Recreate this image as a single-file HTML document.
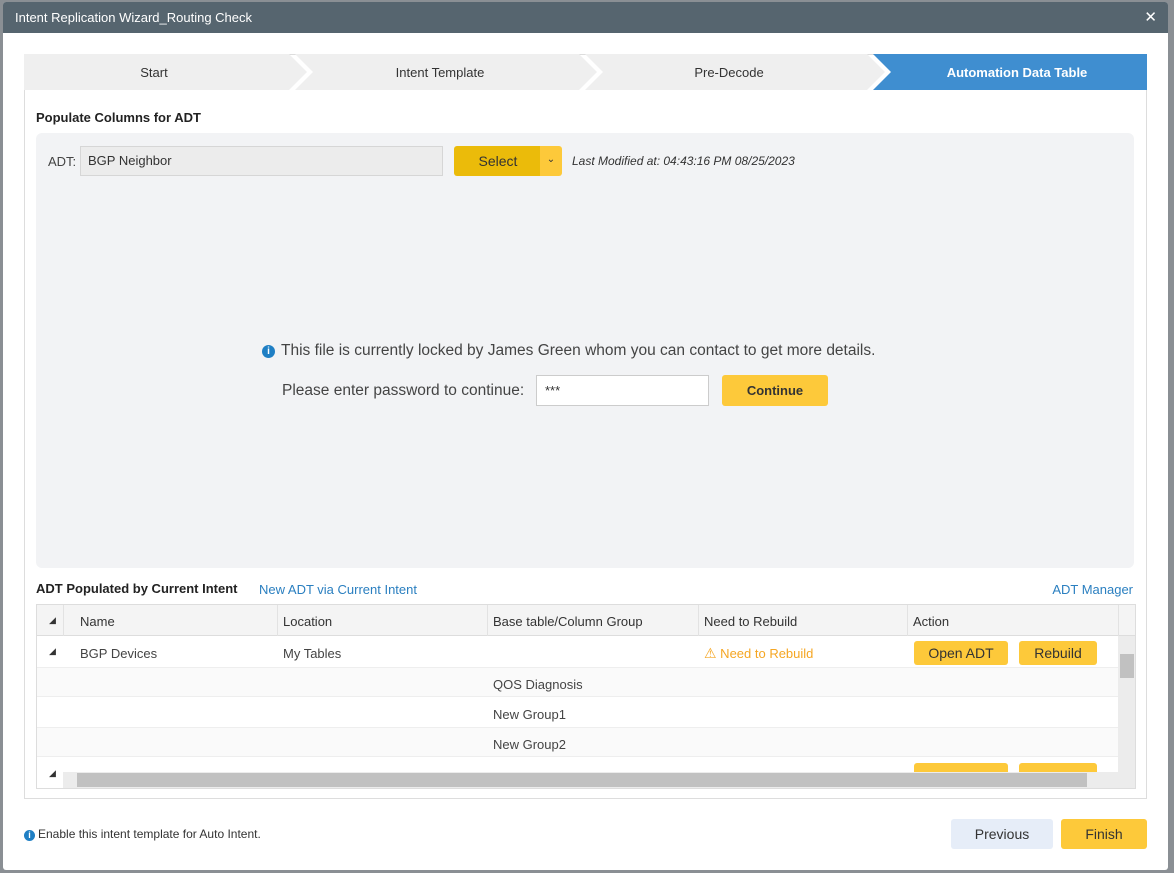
<!DOCTYPE html>
<html><head><style>
*{box-sizing:border-box;margin:0;padding:0}
body{width:1174px;height:873px;background:#8a8f94;font-family:"Liberation Sans",sans-serif;font-size:13px;color:#333;position:relative;overflow:hidden}
.dlg{position:absolute;left:3px;top:2px;width:1165px;height:868px;background:#fff;border-radius:3px;overflow:hidden}
.title{height:31px;background:#56656f;color:#fff;font-size:13px;line-height:31px;padding-left:12px;position:relative}
.x{position:absolute;right:11px;top:0;font-size:15px}
.abs{position:absolute}
.tbl div{position:absolute}
.btn{background:#fdc93a;border-radius:3px;text-align:center;color:#333}
.ar{font-size:9px;color:#333}
</style></head><body>
<div class="dlg">
<div class="title">Intent Replication Wizard_Routing Check<span class="x">✕</span></div>
<div class="abs" style="left:21px;top:52px;width:1123px;height:745px;border:1px solid #ddd"></div>
<svg class="abs" style="left:21px;top:52px" width="1123" height="36">
<polygon points="0,0 265,0 283,18 265,36 0,36" fill="#efefef"/>
<polygon points="271,0 555,0 573,18 555,36 271,36 289,18" fill="#efefef"/>
<polygon points="561,0 843,0 861,18 843,36 561,36 579,18" fill="#efefef"/>
<polygon points="849,0 1123,0 1123,36 849,36 867,18" fill="#3f8ed0"/>
<text x="130" y="23" font-size="13" text-anchor="middle" fill="#333" font-family="Liberation Sans">Start</text>
<text x="416" y="23" font-size="13" text-anchor="middle" fill="#333" font-family="Liberation Sans">Intent Template</text>
<text x="705" y="23" font-size="13" text-anchor="middle" fill="#333" font-family="Liberation Sans">Pre-Decode</text>
<text x="993" y="23" font-size="13" text-anchor="middle" fill="#fff" font-weight="bold" font-family="Liberation Sans">Automation Data Table</text>
</svg>
<div class="abs" style="left:33px;top:108px;font-weight:bold;font-size:13px;color:#222">Populate Columns for ADT</div>
<div class="abs" style="left:33px;top:131px;width:1098px;height:435px;background:#f2f3f5;border-radius:6px"></div>
<div class="abs" style="left:45px;top:152px;color:#444">ADT:</div>
<div class="abs" style="left:77px;top:144px;width:363px;height:30px;background:#ececec;border:1px solid #d6d6d6;line-height:28px;padding-left:7px;color:#333">BGP Neighbor</div>
<div class="abs" style="left:451px;top:144px;width:88px;height:30px;background:#ebbb0a;border-radius:3px 0 0 3px;text-align:center;line-height:30px;font-size:14px">Select</div>
<div class="abs" style="left:537px;top:144px;width:22px;height:30px;background:#fdc93a;border-radius:0 3px 3px 0;text-align:center;line-height:28px;font-size:10px">⌄</div>
<div class="abs" style="left:569px;top:152px;font-style:italic;font-size:12px;color:#333">Last Modified at: 04:43:16 PM 08/25/2023</div>
<div class="abs" style="left:259px;top:340px;font-size:15.5px;color:#444"><span style="display:inline-block;width:13px;height:13px;border-radius:50%;background:#1f7fc4;color:#fff;font-size:10px;text-align:center;line-height:13px;font-weight:bold;margin-right:6px;vertical-align:1px">i</span>This file is currently locked by James Green whom you can contact to get more details.</div>
<div class="abs" style="left:279px;top:380px;font-size:15.5px;color:#444">Please enter password to continue:</div>
<div class="abs" style="left:533px;top:373px;width:173px;height:31px;background:#fff;border:1px solid #ccc;padding-left:8px;line-height:29px">***</div>
<div class="abs btn" style="left:719px;top:373px;width:106px;height:31px;line-height:31px;font-weight:bold">Continue</div>
<div class="abs" style="left:33px;top:579px;font-weight:bold;color:#222">ADT Populated by Current Intent</div>
<div class="abs" style="left:256px;top:580px;color:#2a7fc0">New ADT via Current Intent</div>
<div class="abs" style="left:1130px;top:580px;color:#2a7fc0;transform:translateX(-100%);white-space:nowrap">ADT Manager</div>
<div class="abs tbl" style="left:33px;top:602px;width:1100px;height:185px;border:1px solid #ddd;overflow:hidden">
<div style="left:0;top:0;width:1100px;height:31px;background:#f4f4f4;border-bottom:1px solid #ddd"></div>
<div style="left:26px;top:0;width:1px;height:31px;background:#e2e2e2"></div>
<div style="left:240px;top:0;width:1px;height:31px;background:#e2e2e2"></div>
<div style="left:450px;top:0;width:1px;height:31px;background:#e2e2e2"></div>
<div style="left:661px;top:0;width:1px;height:31px;background:#e2e2e2"></div>
<div style="left:870px;top:0;width:1px;height:31px;background:#e2e2e2"></div>
<div style="left:1081px;top:0;width:1px;height:31px;background:#e2e2e2"></div>
<div class="ar" style="left:12px;top:10px">◢</div>
<div style="left:43px;top:9px">Name</div>
<div style="left:246px;top:9px">Location</div>
<div style="left:456px;top:9px">Base table/Column Group</div>
<div style="left:667px;top:9px">Need to Rebuild</div>
<div style="left:876px;top:9px">Action</div>
<div style="left:0;top:62px;width:1081px;height:30px;background:#fafafa;border-top:1px solid #eee;border-bottom:1px solid #eee"></div>
<div style="left:0;top:122px;width:1081px;height:30px;background:#fafafa;border-top:1px solid #eee;border-bottom:1px solid #eee"></div>
<div class="ar" style="left:12px;top:41px">◢</div>
<div style="left:43px;top:41px;color:#444">BGP Devices</div>
<div style="left:246px;top:41px;color:#444">My Tables</div>
<div style="left:667px;top:40px;color:#f5a623"><span style="font-size:14px">⚠</span> Need to Rebuild</div>
<div class="btn" style="left:877px;top:36px;width:94px;height:24px;line-height:24px;font-size:14px">Open ADT</div>
<div class="btn" style="left:982px;top:36px;width:78px;height:24px;line-height:24px;font-size:14px">Rebuild</div>
<div style="left:456px;top:72px;color:#444">QOS Diagnosis</div>
<div style="left:456px;top:102px;color:#444">New Group1</div>
<div style="left:456px;top:132px;color:#444">New Group2</div>
<div class="ar" style="left:12px;top:163px">◢</div>
<div class="btn" style="left:877px;top:158px;width:94px;height:24px"></div>
<div class="btn" style="left:982px;top:158px;width:78px;height:24px"></div>
<div style="left:26px;top:167px;width:1055px;height:16px;background:#ececec"></div>
<div style="left:40px;top:168px;width:1010px;height:14px;background:#c1c1c1"></div>
<div style="left:1081px;top:31px;width:19px;height:152px;background:#ececec"></div>
<div style="left:1083px;top:49px;width:14px;height:24px;background:#c1c1c1"></div>
</div>
<div class="abs" style="left:21px;top:825px;font-size:12px;color:#333"><span style="display:inline-block;width:11px;height:11px;border-radius:50%;background:#1f7fc4;color:#fff;font-size:9px;text-align:center;line-height:11px;font-weight:bold;margin-right:3px">i</span>Enable this intent template for Auto Intent.</div>
<div class="abs" style="left:948px;top:817px;width:102px;height:30px;background:#e6edf8;border-radius:3px;text-align:center;line-height:30px;color:#333;font-size:14px">Previous</div>
<div class="abs btn" style="left:1058px;top:817px;width:86px;height:30px;line-height:30px;font-size:14px">Finish</div>
</div>
</body></html>
